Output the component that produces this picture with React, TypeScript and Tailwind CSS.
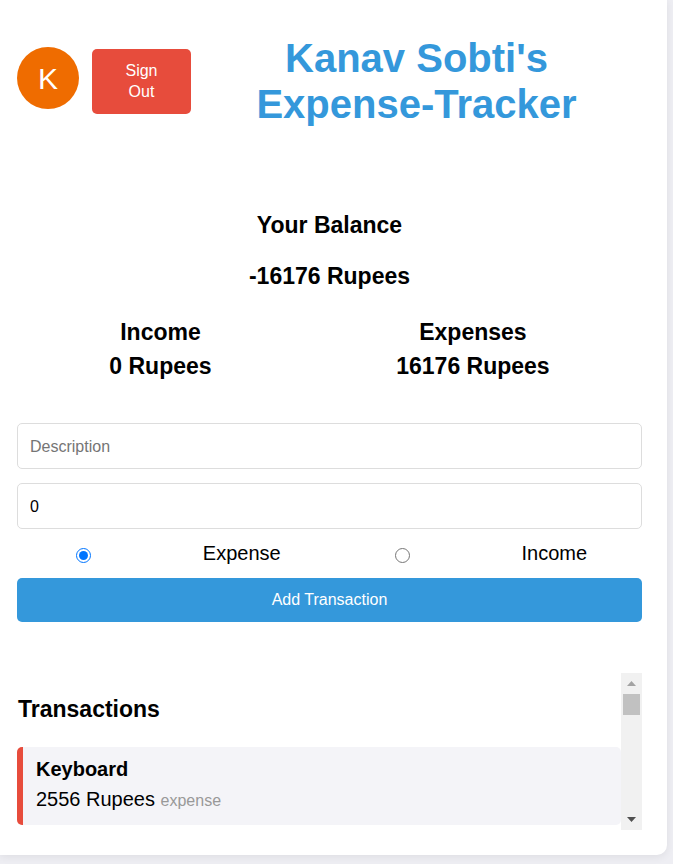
import React, { useState } from 'react';

type Txn = { id: number; text: string; amount: number; type: 'expense' | 'income' };

const TRANSACTIONS: Txn[] = [{ id: 1, text: 'Keyboard', amount: 2556, type: 'expense' }];

// totals as stored for the account
const INCOME = 0;
const EXPENSES = 16176;

const ScrollTrack: React.FC = () => (
  <div className="w-[21px] shrink-0 bg-[#f1f1f1] flex flex-col">
    <div className="h-[21px] flex items-center justify-center">
      <svg width="9" height="5" viewBox="0 0 9 5">
        <path d="M4.5 0L9 5H0z" fill="#a3a3a3" />
      </svg>
    </div>
    <div className="mx-[2px] h-[21px] bg-[#c1c1c1]" />
    <div className="flex-1" />
    <div className="h-[21px] flex items-center justify-center">
      <svg width="9" height="5" viewBox="0 0 9 5">
        <path d="M0 0H9L4.5 5z" fill="#505050" />
      </svg>
    </div>
  </div>
);

export default function App() {
  const [type, setType] = useState<'expense' | 'income'>('expense');
  const [amount, setAmount] = useState('0');
  const [desc, setDesc] = useState('');

  return (
    <div className="min-h-[864px] bg-[#eeeef3] pb-[9px] pr-[6px] font-['Liberation_Sans',Arial,sans-serif] text-black">
      <div className="bg-white rounded-br-[10px] shadow-[0_2px_8px_rgba(0,0,0,0.07)] pt-[35px] pl-[17px] pr-[25px] pb-[25px]">
        {/* header */}
        <div className="flex items-center">
          <div className="w-[62px] h-[62px] mb-[6px] rounded-full bg-[#ef6c00] text-white text-[30px] flex items-center justify-center shrink-0">
            K
          </div>
          <button className="ml-[13px] w-[99px] h-[65px] px-[20px] shrink-0 rounded-[5px] bg-[#e74c3c] text-white text-[16px] leading-[21px]">
            Sign Out
          </button>
          <h1 className="flex-1 text-center text-[40px] leading-[46px] font-bold text-[#3498db]">
            Kanav Sobti's Expense-Tracker
          </h1>
        </div>

        {/* balance */}
        <div className="mt-[85px] text-center font-bold text-[23px] leading-[26px]">
          <h2>Your Balance</h2>
          <p className="mt-[25px]">{INCOME - EXPENSES} Rupees</p>
        </div>
        <div className="mt-[30px] flex justify-around text-center font-bold text-[23px] leading-[26px]">
          <div>
            <h3>Income</h3>
            <p className="mt-[8px]">{INCOME} Rupees</p>
          </div>
          <div>
            <h3>Expenses</h3>
            <p className="mt-[8px]">{EXPENSES} Rupees</p>
          </div>
        </div>

        {/* form */}
        <form className="mt-[44px]" onSubmit={e => e.preventDefault()}>
          <input
            type="text"
            value={desc}
            onChange={e => setDesc(e.target.value)}
            placeholder="Description"
            className="block w-full h-[46px] px-[12px] pt-[1px] border border-[#dddddd] rounded-[5px] text-[16px] placeholder:text-[#757575] outline-none"
          />
          <input
            type="number"
            value={amount}
            onChange={e => setAmount(e.target.value)}
            className="block w-full h-[46px] mt-[14px] px-[12px] pt-[1px] border border-[#dddddd] rounded-[5px] text-[16px] outline-none"
          />
          <div className="mt-[13px] h-[23px] flex justify-around items-center text-[20px] leading-[23px]">
            <input
              type="radio"
              name="type"
              checked={type === 'expense'}
              onChange={() => setType('expense')}
              className="ml-[4px] mr-[2px] mt-[4px] w-[15px] h-[15px]"
            />
            <span>Expense</span>
            <input
              type="radio"
              name="type"
              checked={type === 'income'}
              onChange={() => setType('income')}
              className="ml-[4px] mr-[2px] mt-[4px] w-[15px] h-[15px]"
            />
            <span>Income</span>
          </div>
          <button type="submit" className="mt-[13px] w-full h-[44px] rounded-[5px] bg-[#3498db] text-white text-[16px]">
            Add Transaction
          </button>
        </form>

        {/* list */}
        <div className="mt-[51px] h-[157px] flex">
          <div className="flex-1 overflow-hidden">
            <h2 className="pt-[23px] pl-[1px] font-bold text-[23px] leading-[26px]">Transactions</h2>
            <ul className="mt-[25px]">
              {TRANSACTIONS.map(t => (
                <li
                  key={t.id}
                  className="mb-[10px] bg-[#f4f4f8] border-l-[6px] border-[#e74c3c] rounded-[5px] pl-[13px] pt-[11px] pb-[13px]"
                >
                  <div className="font-bold text-[20px] leading-[23px]">{t.text}</div>
                  <div className="mt-[7px] text-[20px] leading-[23px]">
                    {t.amount} Rupees <span className="text-[16px] text-[#999999]">{t.type}</span>
                  </div>
                </li>
              ))}
            </ul>
          </div>
          <ScrollTrack />
        </div>
      </div>
    </div>
  );
}
